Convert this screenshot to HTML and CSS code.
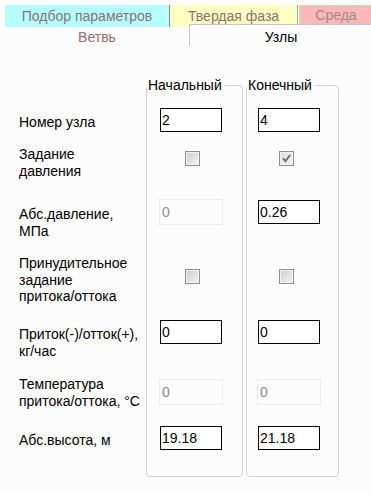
FILE: index.html
```html
<!DOCTYPE html>
<html lang="ru">
<head>
<meta charset="utf-8">
<link rel="stylesheet" href="styles.css">
</head>
<body>
<div class="tabs">
  <div class="tabrow top">
    <div class="tab t-cyan">Подбор параметров</div>
    <div class="sep sep-brown"></div>
    <div class="tab t-yellow">Твердая фаза</div>
    <div class="sep sep-gray"></div>
    <div class="tab t-pink">Среда</div>
  </div>
  <div class="tabrow bottom">
    <div class="tab t-branch">Ветвь</div>
    <div class="tab t-active">Узлы</div>
  </div>
</div>
<div class="form">
  <div class="labels rows">
    <div class="lbl m6">Номер узла</div>
    <div class="lbl">Задание<br>давления</div>
    <div class="lbl m6">Абс.давление,<br>МПа</div>
    <div class="lbl">Принудительное<br>задание<br>притока/оттока</div>
    <div class="lbl m6">Приток(-)/отток(+),<br>кг/час</div>
    <div class="lbl">Температура<br>притока/оттока, °C</div>
    <div class="lbl m6">Абс.высота, м</div>
  </div>
  <fieldset class="grp g1">
    <legend>Начальный</legend>
    <div class="rows">
      <div class="cell"><input class="tb" value="2"></div>
      <div class="cell"><div class="cb r2"></div></div>
      <div class="cell"><input class="tb dis" value="0" disabled></div>
      <div class="cell"><div class="cb r4"></div></div>
      <div class="cell"><input class="tb" value="0"></div>
      <div class="cell"><input class="tb dis r6" value="0" disabled></div>
      <div class="cell"><input class="tb" value="19.18"></div>
    </div>
  </fieldset>
  <fieldset class="grp g2">
    <legend>Конечный</legend>
    <div class="rows">
      <div class="cell"><input class="tb" value="4"></div>
      <div class="cell"><div class="cb r2 checked"><svg viewBox="0 0 13 13" width="13" height="13"><path d="M3 6.3 L5.4 9.2 L10.2 3" fill="none" stroke="#6f6f6f" stroke-width="1.9"/></svg></div></div>
      <div class="cell"><input class="tb" value="0.26"></div>
      <div class="cell"><div class="cb r4"></div></div>
      <div class="cell"><input class="tb" value="0"></div>
      <div class="cell"><input class="tb dis r6" value="0" disabled></div>
      <div class="cell"><input class="tb" value="21.18"></div>
    </div>
  </fieldset>
</div>
</body>
</html>
```
FILE: styles.css
```css
html, body {
  margin: 0;
  padding: 0;
}
body {
  background: #fcfcfc;
  font-family: "Liberation Sans", Arial, sans-serif;
  font-size: 14px;
  color: #000;
  width: 371px;
  height: 492px;
  overflow: hidden;
}
.tabrow {
  display: flex;
}
.tabrow.top {
  padding: 5px 0 0 5px;
  height: 22px;
}
.tab {
  text-align: center;
  white-space: nowrap;
  box-sizing: border-box;
}
.top .tab {
  line-height: 22px;
}
.t-cyan {
  width: 164px;
  background: #b4ffff;
  color: #8b7373;
}
.sep {
  width: 1px;
}
.sep-brown {
  background: #a08787;
}
.t-yellow {
  width: 127px;
  background: #ffffc2;
  color: #8b7373;
}
.sep-gray {
  background: #a6a6a6;
}
.top .t-pink {
  flex: 1;
  margin-left: 1px;
  margin-right: -2px;
  height: 21px;
  line-height: 19px;
  border: 1px solid #b9e6b9;
  background: #ffb7b7;
  color: #9a8c8c;
}
.tabrow.bottom {
  margin-top: -3px;
  padding-left: 5px;
  height: 22px;
}
.t-branch {
  width: 184px;
  padding-top: 4px;
  line-height: 18px;
  color: #a06b6b;
}
.t-active {
  flex: 1;
  margin-right: -1px;
  border-top: 1px solid #c6c6c6;
  border-left: 1px solid #c6c6c6;
  background: #fcfcfc;
  padding-top: 3px;
  line-height: 18px;
  color: #000;
}
.form {
  display: flex;
  margin-top: 31px;
  padding-left: 19px;
  align-items: flex-start;
}
.rows {
  display: grid;
  grid-template-rows: 38px 54px 55px 65px 56px 50px 50px;
}
.labels {
  width: 127px;
  padding-top: 31px;
}
.lbl {
  line-height: 16.5px;
  white-space: nowrap;
}
.m6 {
  margin-top: 6px;
}
.grp {
  margin: 0;
  padding: 0;
  min-width: 0;
  border: 1px solid #d3d3d3;
  border-radius: 4px;
  box-sizing: border-box;
}
.grp legend {
  padding: 0 2px 0 1px;
  line-height: 17px;
}
.grp .rows {
  padding-top: 14px;
}
.g1 {
  width: 97px;
}
.g2 {
  width: 93px;
  margin-left: 3px;
}
.tb {
  display: block;
  box-sizing: border-box;
  width: 62px;
  height: 24px;
  margin: 0;
  padding: 0 0 0 1px;
  border: 1px solid #000;
  background: #fff;
  font-family: "Liberation Sans", Arial, sans-serif;
  font-size: 14px;
  color: #000;
  outline: none;
}
.tb.dis {
  width: 64px;
  height: 26px;
  margin-top: -1px;
  border: 1px solid #ececec;
  background: #fcfcfc;
  color: #8d8d8d;
  padding-left: 2px;
}
.tb.dis.r6 {
  margin-top: 3px;
}
.g1 .tb {
  margin-left: 13px;
}
.g1 .tb.dis {
  margin-left: 12px;
}
.g2 .tb {
  margin-left: 11px;
}
.g2 .tb.dis {
  margin-left: 10px;
}
.cb {
  width: 15px;
  height: 15px;
  box-sizing: border-box;
  border: 1px solid #8f8f8f;
  box-shadow: inset 0 0 0 1px #f3f3f3;
  background: linear-gradient(135deg, #cdcdcd, #f3f3f3);
}
.cb svg {
  display: block;
}
.cb.checked {
  background: linear-gradient(135deg, #dadada, #f6f6f6);
}
.cb.r2 {
  margin-top: 5px;
}
.cb.r4 {
  margin-top: 14px;
}
.g1 .cb {
  margin-left: 38px;
}
.g2 .cb {
  margin-left: 32px;
}
```
